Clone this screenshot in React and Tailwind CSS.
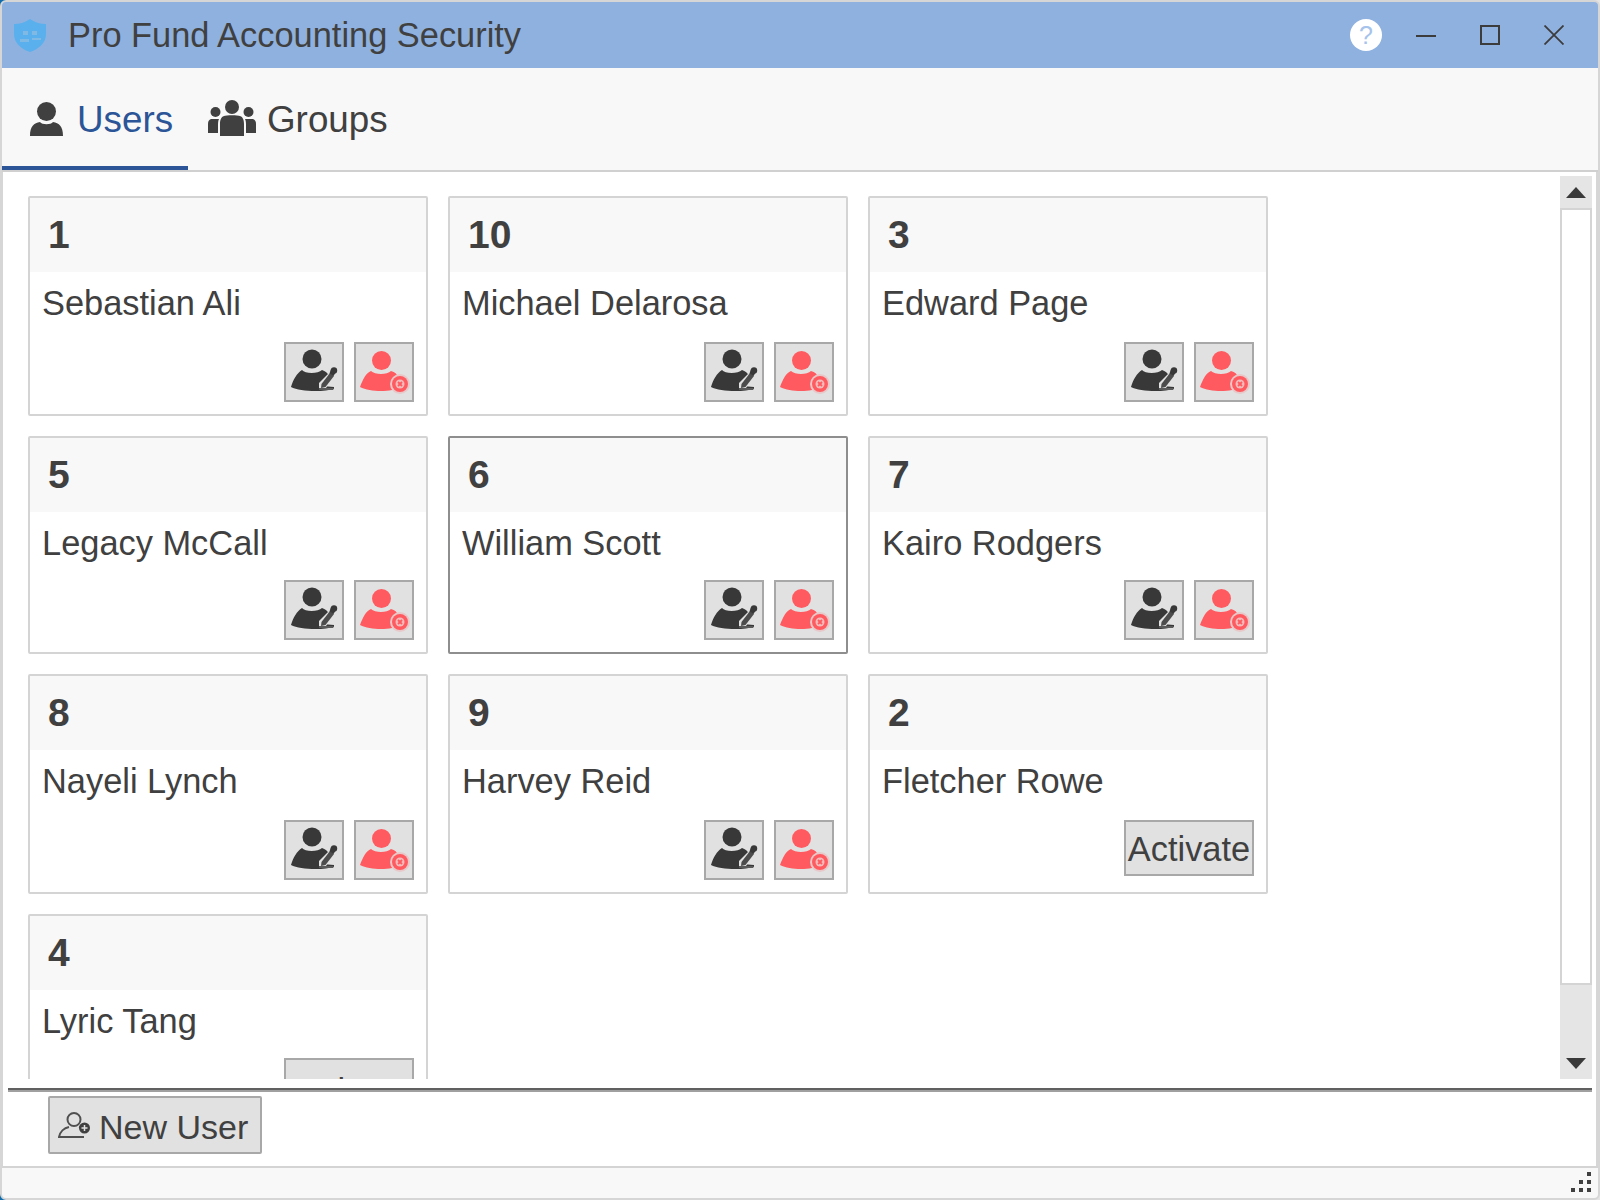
const users = [
  { id: '1', name: 'Sebastian Ali' },
  { id: '10', name: 'Michael Delarosa' },
  { id: '3', name: 'Edward Page' },
  { id: '5', name: 'Legacy McCall' },
  { id: '6', name: 'William Scott', selected: true },
  { id: '7', name: 'Kairo Rodgers' },
  { id: '8', name: 'Nayeli Lynch' },
  { id: '9', name: 'Harvey Reid' },
  { id: '2', name: 'Fletcher Rowe', inactive: true },
  { id: '4', name: 'Lyric Tang', inactive: true, tall: true },
];

function ShieldIcon() {
  return (
    <svg width="32" height="33" viewBox="0 0 32 33">
      <path d="M16 0 C20 3 26 5 32 5 V15 C32 24 25 30 16 33 C7 30 0 24 0 15 V5 C6 5 12 3 16 0 Z" fill="#5ab0ec" />
      <rect x="9" y="12" width="5" height="4" fill="#7fb9e4" />
      <rect x="18" y="12" width="5" height="4" fill="#7fb9e4" />
      <rect x="6" y="20" width="9" height="3" fill="#7fb9e4" />
      <rect x="18" y="19" width="9" height="2" fill="#7fb9e4" />
    </svg>
  );
}

function UserIcon() {
  return (
    <svg className="mt-[3px]" width="33" height="34" viewBox="0 0 33 34" fill="#404040">
      <circle cx="16.5" cy="9.5" r="9.5" />
      <path d="M10 20 C12 23 21 23 23 20 C29 21 33 24 33 34 H0 C0 24 4 21 10 20 Z" />
    </svg>
  );
}

function GroupIcon() {
  return (
    <svg className="mt-[2px]" width="48" height="36" viewBox="0 0 48 36" fill="#404040">
      <circle cx="24" cy="7" r="7" />
      <path d="M16 16 C18 15 30 15 32 16 C35 17 36 20 36 24 V36 H12 V24 C12 20 13 17 16 16 Z" />
      <circle cx="7.5" cy="12" r="5" />
      <path d="M3 19 H11 C10 21 10 23 10 26 V33 H0 V24 C0 21 1 20 3 19 Z" />
      <circle cx="40.5" cy="12" r="5" />
      <path d="M37 19 H45 C47 20 48 21 48 24 V33 H38 V26 C38 23 38 21 37 19 Z" />
    </svg>
  );
}

function EditUserIcon() {
  return (
    <svg width="56" height="56" viewBox="0 0 56 56">
      <circle cx="26" cy="15" r="9.5" fill="#383838" />
      <path d="M16 26 C19 30 32 30 36 26 C39 27 42 29 43 32 L36 42 L48 43 V45 C38 48 14 48 5 43 C7 36 11 29 16 26 Z" fill="#383838" />
      <path d="M42 30 L47 34 L40 44 H33 V39 Z" fill="#e1e1e1" />
      <path d="M44 29 L48 32 L39.500 43 L35 44 L35.500 40 Z" fill="#4c4c4c" />
      <path d="M45 25 L50 28 L47.500 32 L43.500 29.500 Z" fill="#383838" />
      <circle cx="48" cy="26.500" r="3.200" fill="#383838" />
      <path d="M33 44 H48 L47 46 H33 Z" fill="#5a5a5a" />
    </svg>
  );
}

function DeleteUserIcon() {
  return (
    <svg width="56" height="56" viewBox="0 0 56 56">
      <circle cx="25.500" cy="16.500" r="9.500" fill="#ff5a5f" />
      <path d="M15 27 C19 31 31 31 35 27 C39 28 41 30 42 33 L36 46 C26 48 12 47 4 43 C7 35 10 29 15 27 Z" fill="#ff5a5f" />
      <circle cx="44" cy="40" r="10" fill="#e8c8c8" />
      <circle cx="44" cy="40" r="8" fill="#ff5a5f" />
      <circle cx="44" cy="40" r="4.500" fill="#f2bcbc" />
      <path d="M42 38 L46 42 M46 38 L42 42" stroke="#ff5a5f" strokeWidth="1.800" />
    </svg>
  );
}

function NewUserIcon() {
  return (
    <svg width="33" height="26" viewBox="0 0 33 26" fill="none">
      <ellipse cx="16" cy="7.500" rx="6.500" ry="6.500" stroke="#505050" strokeWidth="2" />
      <path d="M11 15 C6 16 2 20 1 25 H26 M21 15 C23 15.500 25 17 26 18" stroke="#505050" strokeWidth="2" />
      <circle cx="26.500" cy="16" r="5.500" fill="#404040" />
      <path d="M26.500 13 V19 M23.500 16 H29.500" stroke="#e1e1e1" strokeWidth="1.500" />
    </svg>
  );
}

function UserCard({ user }) {
  const border = user.selected ? 'border-[#8e8e8e]' : 'border-[#d4d4d4]';
  const activateHeight = user.tall ? 'h-[64px]' : 'h-[56px]';
  return (
    <div className={`flex flex-col border-2 rounded-[2px] bg-white ${border}`}>
      <div className="h-[74px] shrink-0 bg-[#f8f8f8] pl-[18px] pb-[2px] flex items-center text-[39px] font-bold leading-none">
        {user.id}
      </div>
      <div className="pl-[12px] pt-[11px] text-[34.4px] leading-[40px]">{user.name}</div>
      <div className="mt-auto h-[72px] shrink-0 pr-[12px] flex justify-end items-start gap-[10px]">
        {user.inactive ? (
          <button className={`w-[130px] ${activateHeight} shrink-0 border-2 border-[#a8a8a8] bg-[#e1e1e1] pt-[2px] text-[34.4px] leading-none flex items-center justify-center`}>
            Activate
          </button>
        ) : (
          <>
            <button className="w-[60px] h-[60px] border-2 border-[#a8a8a8] bg-[#e1e1e1]">
              <EditUserIcon />
            </button>
            <button className="w-[60px] h-[60px] border-2 border-[#a8a8a8] bg-[#e1e1e1]">
              <DeleteUserIcon />
            </button>
          </>
        )}
      </div>
    </div>
  );
}

function App() {
  return (
    <div className="w-[1600px] h-[1200px] bg-[linear-gradient(to_right,#0f6cad_50%,#e4e4e4_50%)] font-['Liberation_Sans',sans-serif] text-[#404040]">
      <div className="w-full h-full flex flex-col rounded-[6px] overflow-hidden border-2 border-[#d6d6d6] bg-[#d6d6d6]">
        {/* title bar */}
        <div className="h-[66px] shrink-0 bg-[#8fb1df] flex items-center pl-[12px] pr-[34px]">
          <ShieldIcon />
          <span className="ml-[22px] text-[34.4px] leading-none">Pro Fund Accounting Security</span>
          <div className="ml-auto flex items-center">
            <span className="w-[32px] h-[32px] rounded-full bg-white flex items-center justify-center text-[25px] leading-none text-[#a6c3eb]">?</span>
            <svg className="ml-[34px]" width="20" height="20" viewBox="0 0 20 20">
              <rect x="0" y="10" width="20" height="2" fill="#3c3c3c" />
            </svg>
            <svg className="ml-[44px]" width="20" height="20" viewBox="0 0 20 20" fill="none">
              <rect x="1" y="1" width="18" height="18" stroke="#3c3c3c" strokeWidth="2" />
            </svg>
            <svg className="ml-[44px]" width="20" height="20" viewBox="0 0 20 20" fill="none">
              <path d="M0.500 0.500 L19.500 19.500 M19.500 0.500 L0.500 19.500" stroke="#3c3c3c" strokeWidth="1.800" />
            </svg>
          </div>
        </div>

        {/* tabs */}
        <div className="h-[104px] shrink-0 bg-[#f8f8f8] border-b-2 border-[#d0d0d0] flex text-[36.8px] leading-none">
          <div className="w-[186px] h-[102px] border-b-4 border-[#2b5597] pl-[28px] flex items-center gap-[14px] text-[#2b5597]">
            <UserIcon />
            <span className="pt-[6px]">Users</span>
          </div>
          <div className="ml-[20px] h-[102px] pb-[4px] flex items-center gap-[11px]">
            <GroupIcon />
            <span className="pt-[6px]">Groups</span>
          </div>
        </div>

        {/* users list */}
        <div className="h-[994px] shrink-0 bg-white border-l border-r-2 border-[#d6d6d6] pr-[4px] pt-[4px] flex flex-col">
          <div className="h-[903px] shrink-0 flex">
            <div className="flex-1 min-w-0 overflow-hidden pl-[25px] pt-[20px]">
              <div className="grid grid-cols-[400px_400px_400px] gap-x-[20px] gap-y-[20px] grid-rows-[220px_218px_220px_218px]">
                {users.map((user) => (
                  <UserCard key={user.id} user={user} />
                ))}
              </div>
            </div>
            <div className="w-[32px] shrink-0 flex flex-col bg-[#e5e5e5]">
              <div className="h-[32px] shrink-0 flex items-center justify-center">
                <svg width="20" height="11" viewBox="0 0 20 11"><path d="M10 0 L20 11 H0 Z" fill="#3a3a3a" /></svg>
              </div>
              <div className="h-[777px] shrink-0 bg-white border-2 border-[#d4d4d4]"></div>
              <div className="flex-1 flex items-end justify-center pb-[10px]">
                <svg width="20" height="11" viewBox="0 0 20 11"><path d="M0 0 H20 L10 11 Z" fill="#3a3a3a" /></svg>
              </div>
            </div>
          </div>
          <div className="mt-[9px] ml-[5px] h-[4px] shrink-0 border-t-2 border-[#606060] bg-[#a0a0a0]"></div>
          <div className="pl-[45px] pt-[4px]">
            <button className="w-[214px] h-[58px] border-2 border-[#a8a8a8] rounded-[2px] bg-[#e1e1e1] flex items-center pl-[8px] gap-[8px] text-[34px] leading-none">
              <NewUserIcon />
              <span className="pt-[3px]">New User</span>
            </button>
          </div>
        </div>

        {/* status bar */}
        <div className="flex-1 bg-[#f8f8f8] border-t-2 border-[#d4d4d4] flex justify-end items-start pr-[7px] pt-[4px]">
          <svg width="20" height="20" viewBox="0 0 20 20" fill="#404040">
            <rect x="16" y="0" width="4" height="4" />
            <rect x="8" y="8" width="4" height="4" />
            <rect x="16" y="8" width="4" height="4" />
            <rect x="0" y="16" width="4" height="4" />
            <rect x="8" y="16" width="4" height="4" />
            <rect x="16" y="16" width="4" height="4" />
          </svg>
        </div>
      </div>
    </div>
  );
}

export default App;
